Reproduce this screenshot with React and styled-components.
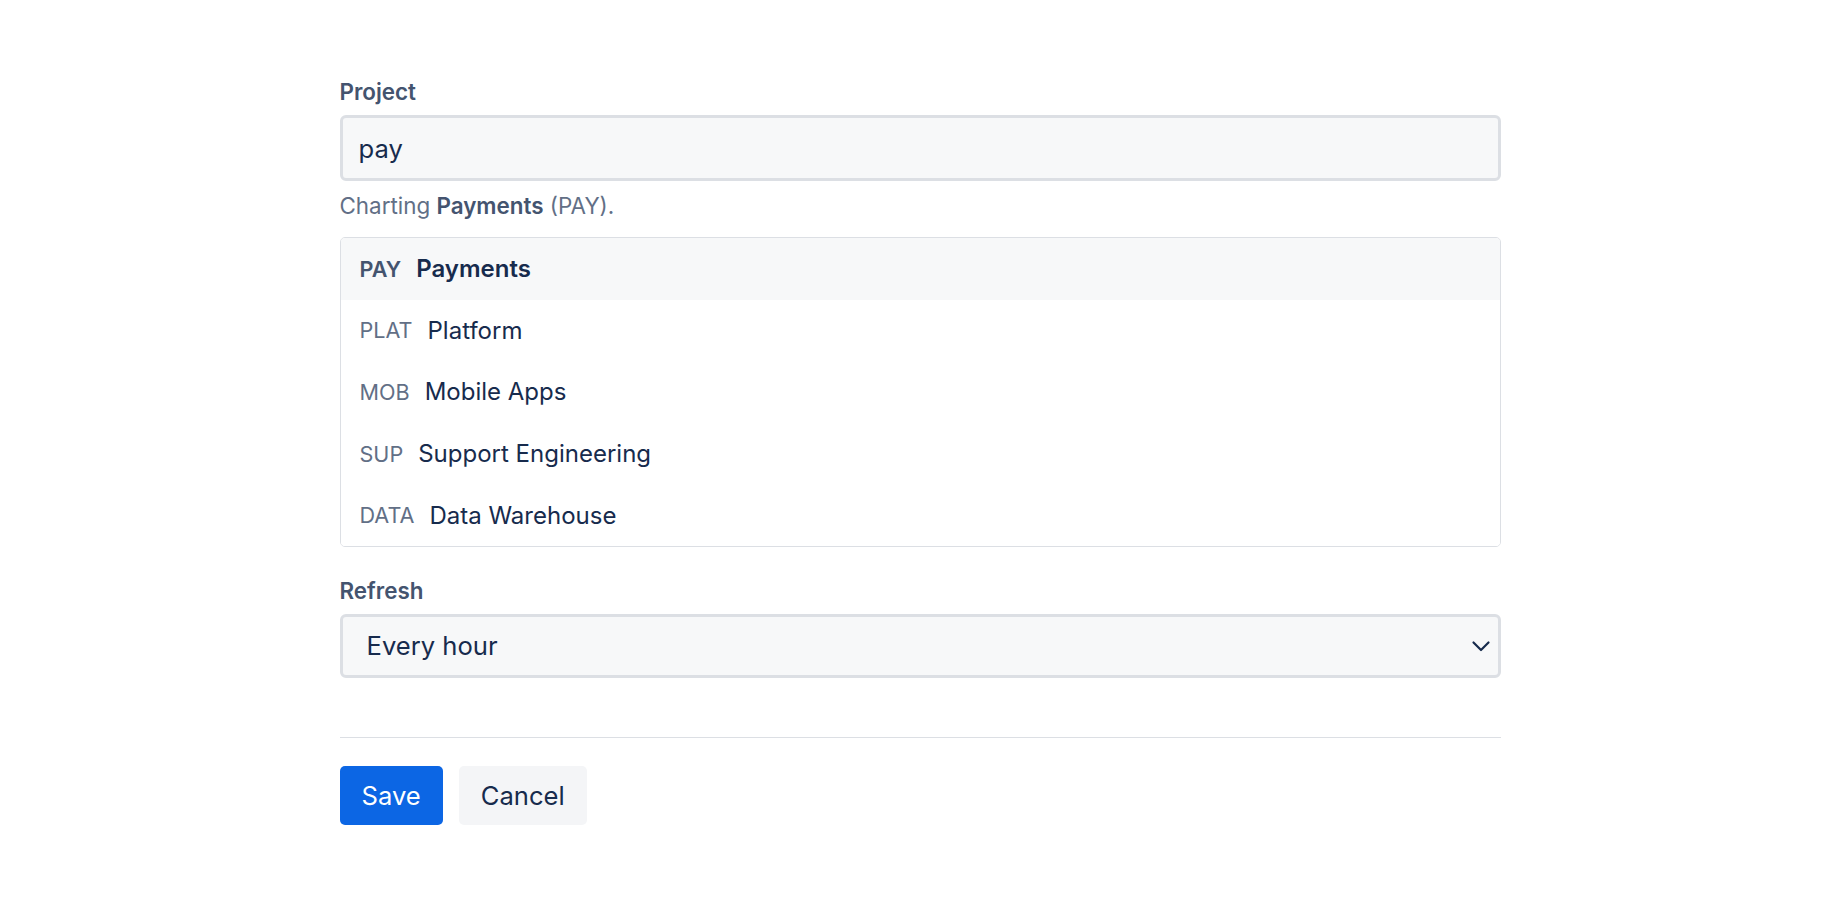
import React from 'react';
import styled, { createGlobalStyle } from 'styled-components';

const GlobalStyle = createGlobalStyle`
  html, body {
    margin: 0;
    padding: 0;
    background: #ffffff;
  }
  body {
    font-family: Inter, "Noto Sans", "Liberation Sans", sans-serif;
    color: #172b4d;
  }
  * { box-sizing: border-box; }
`;

const projects = [
    { key: 'PAY', name: 'Payments' },
    { key: 'PLAT', name: 'Platform' },
    { key: 'MOB', name: 'Mobile Apps' },
    { key: 'SUP', name: 'Support Engineering' },
    { key: 'DATA', name: 'Data Warehouse' },
];

const Page = styled.div`
  max-width: 1161px;
  margin: 0 auto;
  padding-top: 77px;
`;

const Field = styled.div`
  display: flex;
  flex-direction: column;
  & + & {
    margin-top: 29px;
  }
`;

const Label = styled.label`
  font-size: 22.4px;
  line-height: 29px;
  font-weight: 600;
  color: #44546f;
  margin-bottom: 9px;
`;

const TextInput = styled.input`
  height: 66px;
  border: 3px solid #dcdfe4;
  border-radius: 6px;
  background: #f7f8f9;
  padding: 0 16px;
  font-family: inherit;
  font-size: 25.6px;
  color: #172b4d;
  outline: none;
`;

const Helper = styled.p`
  margin: 10px 0 0;
  font-size: 22.4px;
  line-height: 29px;
  color: #626f86;

  strong {
    font-weight: 600;
    color: #44546f;
  }
`;

const List = styled.ul`
  list-style: none;
  margin: 17px 0 0;
  padding: 0;
  border: 1.6px solid #dcdfe4;
  border-radius: 5px;
  overflow: hidden;
`;

const Option = styled.li`
  display: flex;
  align-items: center;
  gap: 15px;
  height: 61.6px;
  padding: 0 19px;
  background: ${p => (p.$active ? '#f7f8f9' : '#ffffff')};
`;

const Code = styled.span`
  font-size: 21.6px;
  font-weight: ${p => (p.$active ? 600 : 400)};
  color: ${p => (p.$active ? '#44546f' : '#626f86')};
`;

const Name = styled.span`
  font-size: 24px;
  font-weight: ${p => (p.$active ? 600 : 400)};
  color: #172b4d;
`;

const SelectWrap = styled.div`
  display: flex;
  align-items: center;
  justify-content: space-between;
  height: 64px;
  border: 3px solid #dcdfe4;
  border-radius: 6px;
  background: #f7f8f9;
  padding: 0 6px 0 24px;
  font-size: 25.6px;
  color: #172b4d;
`;

const Divider = styled.hr`
  border: 0;
  border-top: 1.6px solid #dcdfe4;
  margin: 59px 0 28px;
`;

const Actions = styled.div`
  display: flex;
  gap: 16px;
`;

const Button = styled.button`
  height: 59px;
  padding: 0 22px;
  border: 0;
  border-radius: 5px;
  font-family: inherit;
  font-size: 25.6px;
  background: ${p => (p.$primary ? '#0c66e4' : '#f4f5f7')};
  color: ${p => (p.$primary ? '#ffffff' : '#172b4d')};
  cursor: pointer;
`;

const Chevron = () => (
    <svg width="22" height="22" viewBox="0 0 22 22" fill="none">
        <path d="M3.5 7.5l7.5 7.5 7.5-7.5" stroke="#172b4d" strokeWidth="2.2" strokeLinecap="round" strokeLinejoin="round" />
    </svg>
);

export default function App() {
    return (
        <>
            <GlobalStyle />
            <Page>
                <Field>
                    <Label>Project</Label>
                    <TextInput defaultValue="pay" />
                    <Helper>
                        Charting <strong>Payments</strong> (PAY).
                    </Helper>
                    <List>
                        {projects.map((p, i) => (
                            <Option key={p.key} $active={i === 0}>
                                <Code $active={i === 0}>{p.key}</Code>
                                <Name $active={i === 0}>{p.name}</Name>
                            </Option>
                        ))}
                    </List>
                </Field>
                <Field>
                    <Label>Refresh</Label>
                    <SelectWrap>
                        <span>Every hour</span>
                        <Chevron />
                    </SelectWrap>
                </Field>
                <Divider />
                <Actions>
                    <Button $primary>Save</Button>
                    <Button>Cancel</Button>
                </Actions>
            </Page>
        </>
    );
}
